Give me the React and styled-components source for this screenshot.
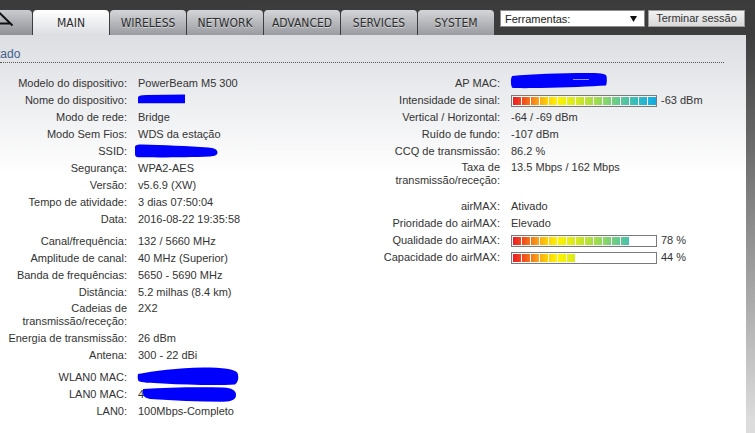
import React from 'react';
import styled, { createGlobalStyle } from 'styled-components';

const GlobalStyle = createGlobalStyle`
  html, body {
    margin: 0;
    padding: 0;
  }
  body {
    width: 755px;
    height: 433px;
    overflow: hidden;
    background: linear-gradient(to bottom, #3b3b3b 0px, #3d3d3d 35px, #dcdcdc 420px);
    font-family: "Liberation Sans", Arial, sans-serif;
  }
`;

const SEG_COLORS = [
  '#ec1c24', '#f0441f', '#f5761b', '#faa918', '#ffd400', '#fff200',
  '#ecef0c', '#d8ea1d', '#c0e42f', '#a6de47', '#8fd862', '#78d07c',
  '#5ec995', '#46c2ad', '#30bbc3', '#1db3d8', '#10abe6',
];

const Page = styled.div`
  width: 755px;
  height: 433px;
  overflow: hidden;
`;

const Header = styled.div`
  display: flex;
  align-items: flex-start;
  height: 35px;
  padding-top: 10px;
  box-sizing: border-box;
`;

const Tabs = styled.div`
  display: flex;
  gap: 1px;
  height: 25px;
`;

const Tab = styled.div`
  width: 76px;
  height: 25px;
  border-radius: 4px 4px 0 0;
  font-family: "DejaVu Sans Condensed", "Liberation Sans Narrow", sans-serif;
  font-size: 12px;
  line-height: 27px;
  text-align: center;
  color: #2b2b2b;
  text-shadow: 0 1px 0 rgba(255, 255, 255, 0.5);
  background: ${(p) =>
    p.$active
      ? 'linear-gradient(to bottom, #ffffff, #dcdee2)'
      : 'linear-gradient(to bottom, #d5d6d9, #999ba0)'};
`;

const LogoTab = styled.div`
  width: 32px;
  height: 25px;
  border-radius: 0 4px 0 0;
  background: linear-gradient(to bottom, #cbccd0, #8f9196);
`;

const Tools = styled.div`
  display: flex;
  gap: 3px;
  margin-left: 6px;
`;

const Select = styled.div`
  width: 145px;
  height: 17px;
  box-sizing: border-box;
  border: 1px solid #8c8c8c;
  background: #fff;
  display: flex;
  align-items: center;
  justify-content: space-between;
  padding: 0 7px 0 4px;
  font-size: 11px;
  color: #222;
`;

const Button = styled.div`
  width: 97px;
  height: 17px;
  box-sizing: border-box;
  border: 1px solid #9a9a9a;
  background: linear-gradient(to bottom, #f2f2f2, #d9d9d9);
  font-size: 11px;
  line-height: 15px;
  text-align: center;
  color: #333;
`;

const Panel = styled.div`
  width: 746px;
  height: 398px;
  box-sizing: border-box;
  padding-top: 12px;
  overflow: hidden;
  background: linear-gradient(to bottom, #dcdee2 0px, #ffffff 140px);
`;

const Title = styled.div`
  width: 724px;
  font-size: 12px;
  line-height: 15px;
  color: #3d5f8a;
  border-bottom: 1px dotted #555;

  span {
    margin-left: -17px;
  }
`;

const Columns = styled.div`
  display: flex;
  margin-top: 12px;
`;

const Section = styled.div`
  width: ${(p) => p.$width || 'auto'};
  display: grid;
  grid-template-columns: 127px 1fr;
  column-gap: 11px;
  align-content: start;
`;

const Cell = styled.div`
  padding: ${(p) => (p.$wrap ? '1px 0 2px' : '2px 0')};
  font-size: 11px;
  line-height: 13px;
  color: #333;
`;

const Label = styled(Cell)`
  text-align: right;
`;

const Value = styled(Cell)`
  align-self: start;
  display: flex;
  align-items: center;
  gap: 4px;
  white-space: nowrap;
`;

const Spacer = styled.div`
  grid-column: 1 / -1;
  height: ${(p) => p.$h}px;
`;

const Meter = styled.div`
  width: 146px;
  height: 12px;
  box-sizing: border-box;
  border: 1px solid #7a7a7a;
  background: #fff;
  padding: 1px;
  display: flex;
  gap: 1px;
`;

const Seg = styled.div`
  width: 8px;
  height: 8px;
  flex: none;
  background: linear-gradient(to right, ${(p) => p.$from}, ${(p) => p.$to});
`;

const Redact = styled.svg`
  display: block;
  overflow: visible;
  flex: none;
`;

const Bar = ({ filled }) => (
  <Meter>
    {Array.from({ length: filled }).map((_, i) => (
      <Seg key={i} $from={SEG_COLORS[i]} $to={SEG_COLORS[i + 1]} />
    ))}
  </Meter>
);

const Blob = ({ w, d, children }) => (
  <Redact width={w} height="13" viewBox={`0 0 ${w} 13`}>
    <path d={d} fill="#0000ff" />
    {children}
  </Redact>
);

const left = [
  ['Modelo do dispositivo:', 'PowerBeam M5 300'],
  ['Nome do dispositivo:', <Blob w={47} d="M0,3 Q1,1 8,1 L47,0.5 L47,9.3 L0,9.3 Z" />],
  ['Modo de rede:', 'Bridge'],
  ['Modo Sem Fios:', 'WDS da estação'],
  [
    'SSID:',
    <Blob w={80} d="M-3,2 C-3,0 0,-0.5 4,-0.5 C25,0 50,1 70,2.5 C76,3 79.5,4.5 79.5,7.5 C79.5,10 77,11 72,11.5 C50,12.5 20,12.5 0,12.3 C-3,12 -3,10 -3,8 Z" />,
  ],
  ['Segurança:', 'WPA2-AES'],
  ['Versão:', 'v5.6.9 (XW)'],
  ['Tempo de atividade:', '3 dias 07:50:04'],
  ['Data:', '2016-08-22 19:35:58'],
  5,
  ['Canal/frequência:', '132 / 5660 MHz'],
  ['Amplitude de canal:', '40 MHz (Superior)'],
  ['Banda de frequências:', '5650 - 5690 MHz'],
  ['Distância:', '5.2 milhas (8.4 km)'],
  ['Cadeias de transmissão/receção:', '2X2', true],
  ['Energia de transmissão:', '26 dBm'],
  ['Antena:', '300 - 22 dBi'],
  5,
  [
    'WLAN0 MAC:',
    <Blob w={100} d="M0,3 C15,0 40,-3 65,-3.5 C85,-3.5 97,-2 99.5,2 C101,6 100.5,11 97,13.5 C80,14.5 50,14 25,12.5 C12,12 3,11.5 0.5,10 C-0.5,8 -0.5,5 0,3 Z" />,
  ],
  [
    'LAN0 MAC:',
    <>
      <span>4</span>
      <Blob w={88} d="M-5,1 C18,-0.5 45,-1 75,-0.5 C85,0 88,3 88,7 C88,11 85,13.5 75,13.7 C50,13.7 25,12.5 2,11 C-3,10 -5,8 -5,5 Z" />
    </>,
  ],
  ['LAN0:', '100Mbps-Completo'],
];

const right = [
  [
    'AP MAC:',
    <Blob w={96} d="M1,-1 C20,-3 50,-4 75,-4 C88,-4 95,-3.5 95.5,-1 C96,2 96,6 95,8.5 C80,9.5 55,10.5 30,11 C15,11.2 5,11.2 1,10.8 C-0.5,7 -0.5,2 1,-1 Z">
      <path d="M62,2.5 L78,2.5" stroke="#8c93ff" strokeWidth="1" />
    </Blob>,
  ],
  ['Intensidade de sinal:', <><Bar filled={16} /><span>-63 dBm</span></>],
  ['Vertical / Horizontal:', '-64 / -69 dBm'],
  ['Ruído de fundo:', '-107 dBm'],
  ['CCQ de transmissão:', '86.2 %'],
  ['Taxa de transmissão/receção:', '13.5 Mbps / 162 Mbps', true],
  9,
  ['airMAX:', 'Ativado'],
  ['Prioridade do airMAX:', 'Elevado'],
  ['Qualidade do airMAX:', <><Bar filled={13} /><span>78 %</span></>],
  ['Capacidade do airMAX:', <><Bar filled={7} /><span>44 %</span></>],
];

const Rows = ({ rows }) =>
  rows.map((row, i) =>
    typeof row === 'number' ? (
      <Spacer key={i} $h={row} />
    ) : (
      <React.Fragment key={i}>
        <Label $wrap={row[2]}>{row[0]}</Label>
        <Value $wrap={row[2]}>{row[1]}</Value>
      </React.Fragment>
    )
  );

const TABS = ['MAIN', 'WIRELESS', 'NETWORK', 'ADVANCED', 'SERVICES', 'SYSTEM'];

export default function App() {
  return (
    <Page>
      <GlobalStyle />
      <Header>
        <Tabs>
          <LogoTab>
            <svg width="32" height="25" viewBox="0 0 32 25">
              <path d="M-1,2.5 L12.5,15.5 M-1,13.5 L10,13.5" stroke="#111" strokeWidth="2" fill="none" />
            </svg>
          </LogoTab>
          {TABS.map((t) => (
            <Tab key={t} $active={t === 'MAIN'}>{t}</Tab>
          ))}
        </Tabs>
        <Tools>
          <Select>
            <span>Ferramentas:</span>
            <svg width="7" height="6" viewBox="0 0 7 6">
              <path d="M0,0 L7,0 L3.5,6 Z" fill="#111" />
            </svg>
          </Select>
          <Button>Terminar sessão</Button>
        </Tools>
      </Header>
      <Panel>
        <Title><span>Estado</span></Title>
        <Columns>
          <Section $width="373px">
            <Rows rows={left} />
          </Section>
          <Section>
            <Rows rows={right} />
          </Section>
        </Columns>
      </Panel>
    </Page>
  );
}
